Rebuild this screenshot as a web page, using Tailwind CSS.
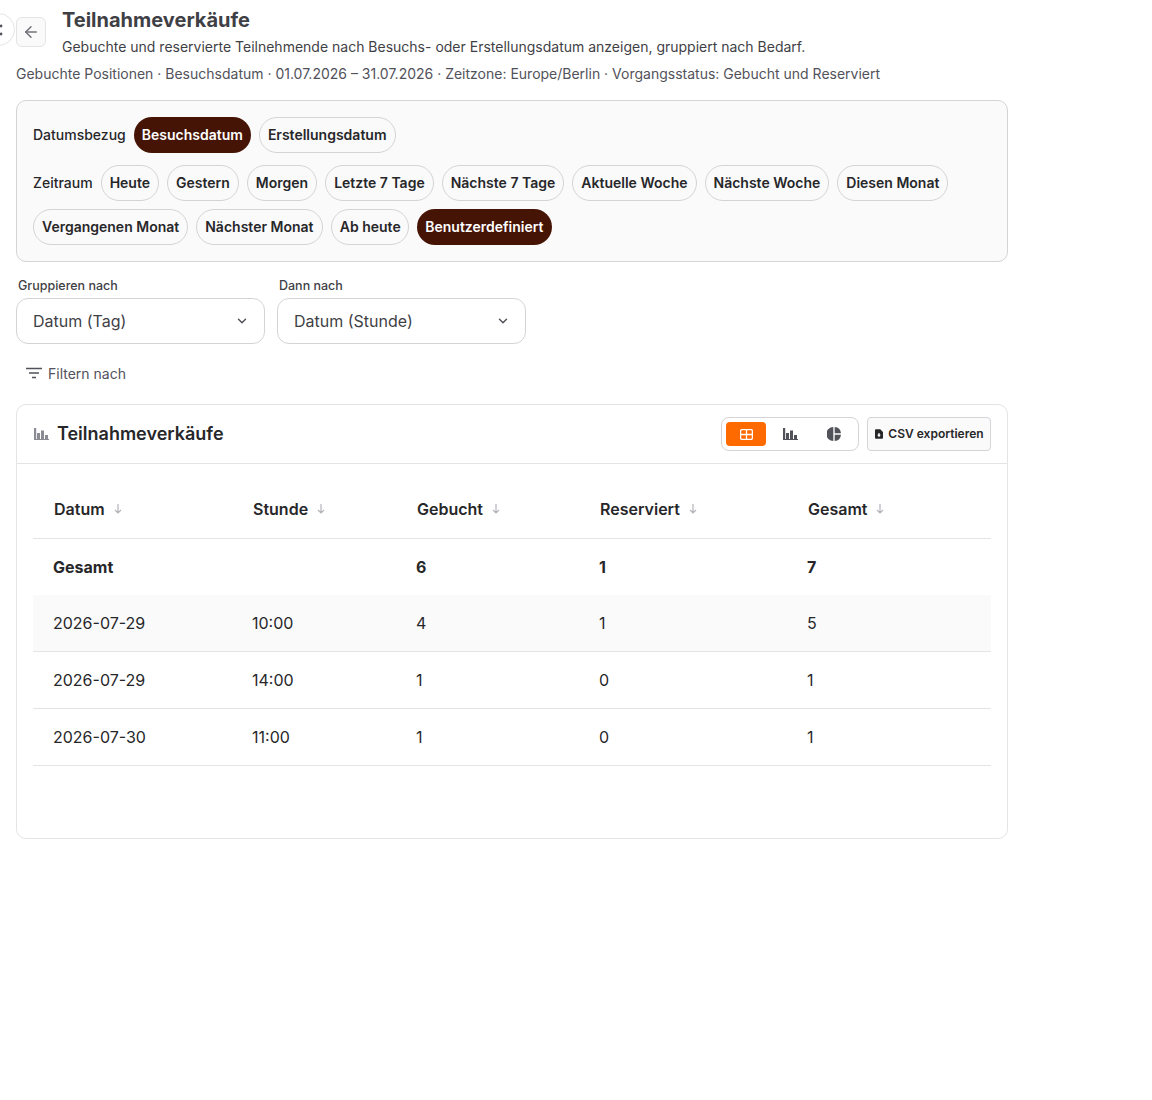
<!DOCTYPE html>
<html lang="de">
<head>
  <meta charset="UTF-8" />
  <title>Teilnahmeverkäufe</title>
  <script src="https://cdn.jsdelivr.net/npm/@tailwindcss/browser@4"></script>
</head>
<body class="bg-white font-['Inter',sans-serif] text-[#27272a] overflow-hidden">
  <!-- sidebar toggle, half off screen -->
  <div class="absolute left-[-18px] top-[13px] w-[33px] h-[33px] rounded-full border border-[#e4e4e7] bg-white flex items-center pl-[16px]">
    <svg width="4" height="12" viewBox="0 0 4 12" fill="#52525b"><circle cx="2" cy="2" r="1.4"/><circle cx="2" cy="10" r="1.4"/></svg>
  </div>

  <main class="w-[1008px] pl-4 pt-[8px]">
    <header class="flex gap-4 items-start">
      <button class="mt-[9px] w-[30px] h-[30px] rounded-md border border-[#e4e4e7] bg-[#fafafa] flex items-center justify-center shrink-0">
        <svg width="18" height="18" viewBox="0 0 24 24" fill="none" stroke="#71717a" stroke-width="2" stroke-linecap="round" stroke-linejoin="round"><path d="M19 12H5"/><path d="M12 19l-7-7 7-7"/></svg>
      </button>
      <div>
        <h1 class="text-[20px] leading-[24px] font-bold text-[#3f3f46]">Teilnahmeverkäufe</h1>
        <p class="mt-[3px] text-[14px] leading-[24px] text-[#3f3f46]">Gebuchte und reservierte Teilnehmende nach Besuchs- oder Erstellungsdatum anzeigen, gruppiert nach Bedarf.</p>
      </div>
    </header>
    <p class="mt-[3px] text-[14px] leading-[24px] text-[#52525b]">Gebuchte Positionen · Besuchsdatum · 01.07.2026 – 31.07.2026 · Zeitzone: Europe/Berlin · Vorgangsstatus: Gebucht und Reserviert</p>

    <section class="mt-[14px] rounded-[10px] border border-[#d4d4d8] bg-[#fafafa] px-4 pt-4 pb-4 h-[162px]">
      <div class="flex items-center gap-2 h-9 text-[14px] font-medium">
        <span class="pb-[2px]">Datumsbezug</span>
        <span class="h-9 px-2 pb-[2px] rounded-full bg-[#461405] text-white font-semibold flex items-center">Besuchsdatum</span>
        <span class="h-9 px-2 pb-[2px] rounded-full border border-[#d4d4d8] font-semibold flex items-center">Erstellungsdatum</span>
      </div>
      <div class="mt-3 flex flex-wrap items-center gap-x-2 gap-y-2 text-[14px] font-semibold whitespace-nowrap">
        <span class="font-medium pb-[2px]">Zeitraum</span>
        <span class="h-9 px-2 pb-[2px] rounded-full border border-[#d4d4d8] flex items-center">Heute</span>
        <span class="h-9 px-2 pb-[2px] rounded-full border border-[#d4d4d8] flex items-center">Gestern</span>
        <span class="h-9 px-2 pb-[2px] rounded-full border border-[#d4d4d8] flex items-center">Morgen</span>
        <span class="h-9 px-2 pb-[2px] rounded-full border border-[#d4d4d8] flex items-center">Letzte 7 Tage</span>
        <span class="h-9 px-2 pb-[2px] rounded-full border border-[#d4d4d8] flex items-center">Nächste 7 Tage</span>
        <span class="h-9 px-2 pb-[2px] rounded-full border border-[#d4d4d8] flex items-center">Aktuelle Woche</span>
        <span class="h-9 px-2 pb-[2px] rounded-full border border-[#d4d4d8] flex items-center">Nächste Woche</span>
        <span class="h-9 px-2 pb-[2px] rounded-full border border-[#d4d4d8] flex items-center">Diesen Monat</span>
        <span class="h-9 px-2 pb-[2px] rounded-full border border-[#d4d4d8] flex items-center">Vergangenen Monat</span>
        <span class="h-9 px-2 pb-[2px] rounded-full border border-[#d4d4d8] flex items-center w-[127px]">Nächster Monat</span>
        <span class="h-9 pl-[7.500px] pb-[2px] rounded-full border border-[#d4d4d8] flex items-center w-[78px]">Ab heute</span>
        <span class="h-9 px-2 pb-[2px] rounded-full bg-[#461405] text-white flex items-center w-[135px]">Benutzerdefiniert</span>
      </div>
    </section>

    <div class="mt-[15px] flex gap-3">
      <label class="block w-[249px]">
        <span class="block pl-[2px] text-[12.5px] leading-[18px] font-medium text-[#3f3f46]">Gruppieren nach</span>
        <span class="mt-[3px] h-[46px] px-4 rounded-xl border border-[#d4d4d8] flex items-center justify-between text-[16px] text-[#3f3f46]">
          Datum (Tag)
          <svg width="14" height="14" viewBox="0 0 24 24" fill="none" stroke="#52525b" stroke-width="2.5" stroke-linecap="round" stroke-linejoin="round" class="mr-[-1px]"><path d="M6 9l6 6 6-6"/></svg>
        </span>
      </label>
      <label class="block w-[249px]">
        <span class="block pl-[2px] text-[12.5px] leading-[18px] font-medium text-[#3f3f46]">Dann nach</span>
        <span class="mt-[3px] h-[46px] px-4 rounded-xl border border-[#d4d4d8] flex items-center justify-between text-[16px] text-[#3f3f46]">
          Datum (Stunde)
          <svg width="14" height="14" viewBox="0 0 24 24" fill="none" stroke="#52525b" stroke-width="2.5" stroke-linecap="round" stroke-linejoin="round" class="mr-[-1px]"><path d="M6 9l6 6 6-6"/></svg>
        </span>
      </label>
    </div>

    <button class="mt-[15px] ml-[10px] h-[30px] pb-[2px] flex items-center gap-[6px] text-[14px] text-[#52525b]">
      <svg width="16" height="12" viewBox="0 0 16 12" fill="none" stroke="#52525b" stroke-width="1.5"><path d="M0 1.500h16M3 6h10M6 10.500h4"/></svg>
      Filtern nach
    </button>

    <section class="mt-[15px] h-[435px] rounded-[10px] border border-[#e4e4e7] bg-white">
      <div class="h-[59px] pl-4 pr-4 border-b border-[#e4e4e7] flex items-center">
        <svg width="15" height="12" viewBox="0 0 15 12" fill="#8b8b94" class="ml-[1px] mr-[8px]"><path d="M0 0h2.200v11H0zM3 5h3v6H3zM7 2.500h3V11H7zM11 7h3v4h-3zM0 11h15v1H0z"/></svg>
        <h2 class="text-[18px] font-semibold text-[#27272a] pb-[2px]">Teilnahmeverkäufe</h2>
        <div class="ml-auto w-[138px] h-[34px] rounded-lg border border-[#d4d4d8] flex items-center pl-1 pr-1">
          <span class="w-10 h-6 rounded bg-[#ff6a00] flex items-center justify-center">
            <svg width="13" height="11" viewBox="0 0 13 11" fill="none" stroke="#fff" stroke-width="1.300"><rect x=".6" y=".6" width="11.800" height="9.800" rx="1.400"/><path d="M.6 5.500h11.800M6.500 .6v9.800"/></svg>
          </span>
          <span class="w-[48px] flex justify-center">
            <svg width="15" height="12" viewBox="0 0 15 12" fill="#52525b"><path d="M0 0h2.200v11H0zM3 5h3v6H3zM7 2.500h3V11H7zM11 7h3v4h-3zM0 11h15v1H0z"/></svg>
          </span>
          <span class="w-[40px] flex justify-center">
            <svg width="14" height="14" viewBox="0 0 14 14" fill="#52525b"><path d="M6.300 0v14A7 7 0 0 1 6.300 0z"/><path d="M7.700 0A7 7 0 0 1 14 6.300H7.700z"/><path d="M7.700 7.700H14A7 7 0 0 1 7.700 14z"/></svg>
          </span>
        </div>
        <button class="ml-2 w-[124px] h-[34px] pl-[1px] rounded border border-[#d4d4d8] bg-[#fafafa] flex items-center justify-center gap-[5px] text-[12px] font-semibold text-[#27272a]">
          <svg width="8" height="10" viewBox="0 0 10 12"><path fill="#27272a" d="M1.200 0H6.500L10 3.500V10.800A1.200 1.200 0 0 1 8.800 12H1.200A1.200 1.200 0 0 1 0 10.800V1.200A1.200 1.200 0 0 1 1.200 0z"/><path fill="#fff" d="M4 5h2v2h1.300L5 10 2.700 7H4z"/></svg>
          CSV exportieren
        </button>
      </div>

      <div class="pl-4 pr-4 pt-4">
        <table class="w-[958px] table-fixed border-collapse text-[16px] text-[#27272a]">
          <colgroup><col class="w-[199px]" /><col class="w-[164px]" /><col class="w-[183px]" /><col class="w-[208px]" /><col class="w-[204px]" /></colgroup>
          <thead>
            <tr class="h-[58px] border-b border-[#e4e4e7] text-left">
              <th class="pl-[21px] font-semibold"><span class="inline-flex items-center gap-[9px]">Datum <svg width="8" height="10" viewBox="0 0 8 10" fill="none" stroke="#b4b4bb" stroke-width="1.200"><path d="M4 0v9M1 6l3 3 3-3"/></svg></span></th>
              <th class="pl-[21px] font-semibold"><span class="inline-flex items-center gap-[9px]">Stunde <svg width="8" height="10" viewBox="0 0 8 10" fill="none" stroke="#b4b4bb" stroke-width="1.200"><path d="M4 0v9M1 6l3 3 3-3"/></svg></span></th>
              <th class="pl-[21px] font-semibold"><span class="inline-flex items-center gap-[9px]">Gebucht <svg width="8" height="10" viewBox="0 0 8 10" fill="none" stroke="#b4b4bb" stroke-width="1.200"><path d="M4 0v9M1 6l3 3 3-3"/></svg></span></th>
              <th class="pl-[21px] font-semibold"><span class="inline-flex items-center gap-[9px]">Reserviert <svg width="8" height="10" viewBox="0 0 8 10" fill="none" stroke="#b4b4bb" stroke-width="1.200"><path d="M4 0v9M1 6l3 3 3-3"/></svg></span></th>
              <th class="pl-[21px] font-semibold"><span class="inline-flex items-center gap-[9px]">Gesamt <svg width="8" height="10" viewBox="0 0 8 10" fill="none" stroke="#b4b4bb" stroke-width="1.200"><path d="M4 0v9M1 6l3 3 3-3"/></svg></span></th>
            </tr>
          </thead>
          <tbody>
            <tr class="h-[57px] font-bold">
              <td class="pl-5">Gesamt</td><td class="pl-5"></td><td class="pl-5">6</td><td class="pl-5">1</td><td class="pl-5">7</td>
            </tr>
            <tr class="h-[56px] bg-[#fafafa] border-b border-[#e4e4e7]">
              <td class="pl-5">2026-07-29</td><td class="pl-5">10:00</td><td class="pl-5">4</td><td class="pl-5">1</td><td class="pl-5">5</td>
            </tr>
            <tr class="h-[57px] border-b border-[#e4e4e7]">
              <td class="pl-5">2026-07-29</td><td class="pl-5">14:00</td><td class="pl-5">1</td><td class="pl-5">0</td><td class="pl-5">1</td>
            </tr>
            <tr class="h-[57px] border-b border-[#e4e4e7]">
              <td class="pl-5">2026-07-30</td><td class="pl-5">11:00</td><td class="pl-5">1</td><td class="pl-5">0</td><td class="pl-5">1</td>
            </tr>
          </tbody>
        </table>
      </div>
    </section>
  </main>
</body>
</html>
